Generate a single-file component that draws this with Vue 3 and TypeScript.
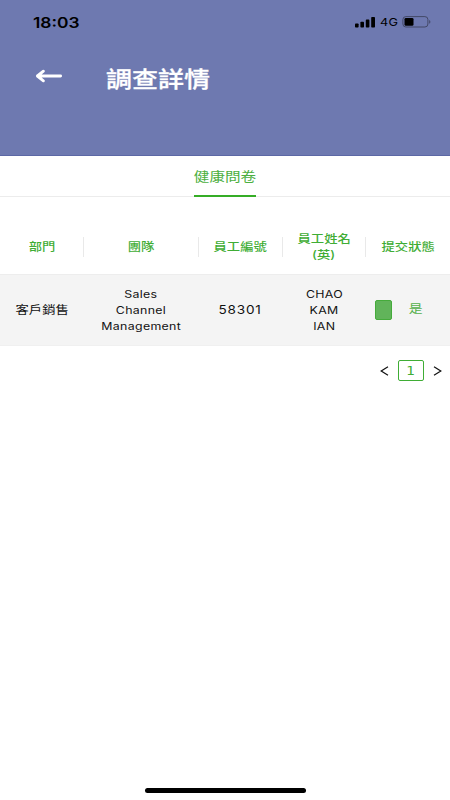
<script setup lang="ts">
interface Column {
  key: string
  lines: string[]
}

interface Cell {
  kind: 'han' | 'latin' | 'digits'
  lines: string[]
}

const columns: Column[] = [
  { key: 'department', lines: ['部門'] },
  { key: 'team', lines: ['團隊'] },
  { key: 'id', lines: ['員工編號'] },
  { key: 'name', lines: ['員工姓名', '(英)'] },
  { key: 'status', lines: ['提交狀態'] },
]

const row: Cell[] = [
  { kind: 'han', lines: ['客戶銷售'] },
  { kind: 'latin', lines: ['Sales', 'Channel', 'Management'] },
  { kind: 'digits', lines: ['58301'] },
  { kind: 'latin', lines: ['CHAO', 'KAM', 'IAN'] },
]
</script>

<template>
  <div class="screen">
    <header class="header">
      <div class="status-bar">
        <span class="time wide">18:03</span>
        <div class="indicators">
          <svg class="signal" width="20" height="11" viewBox="0 0 20 11">
            <rect x="0" y="6.5" width="3.6" height="4" rx="0.8" />
            <rect x="5.4" y="4.7" width="3.6" height="5.8" rx="0.8" />
            <rect x="10.8" y="2.6" width="3.6" height="7.9" rx="0.8" />
            <rect x="16.2" y="0" width="3.8" height="10.5" rx="0.8" />
          </svg>
          <span class="network wide">4G</span>
          <svg class="battery" width="30" height="12" viewBox="0 0 30 12">
            <rect x="0.9" y="0.6" width="25" height="10.4" rx="3" fill="none" stroke="#434967" stroke-width="1" />
            <rect x="2.5" y="2" width="9" height="7.7" rx="1.3" fill="#000" />
            <path d="M27.2 4v3.8c1.6-.5 1.6-3.3 0-3.8z" fill="#434967" />
          </svg>
        </div>
      </div>
      <div class="title-bar">
        <svg class="back" width="28" height="14" viewBox="0 0 28 14">
          <path d="M2.4 7H25.6M8.4 2.2L2.4 7L8.4 11.8" fill="none" stroke="#fff" stroke-width="2.9" stroke-linecap="round" stroke-linejoin="round" />
        </svg>
        <h1 class="title wide">調查詳情</h1>
      </div>
    </header>

    <nav class="tabs">
      <div class="tab"><span class="wide">健康問卷</span></div>
    </nav>

    <main>
      <div class="grid head">
        <div v-for="column in columns" :key="column.key" class="cell">
          <span v-for="line in column.lines" :key="line" class="wide">{{ line }}</span>
        </div>
      </div>
      <div class="grid body">
        <div v-for="(cell, index) in row" :key="index" class="cell" :class="cell.kind">
          <span v-for="line in cell.lines" :key="line" class="wide">{{ line }}</span>
        </div>
        <div class="cell status">
          <i class="mark"></i>
          <span class="yes wide">是</span>
        </div>
      </div>
      <div class="pager">
        <svg width="9" height="10" viewBox="0 0 9 10"><path d="M8 .8L1.2 5L8 9.2" /></svg>
        <div class="page"><span class="wide">1</span></div>
        <svg width="9" height="10" viewBox="0 0 9 10"><path d="M1 .8L7.8 5L1 9.2" /></svg>
      </div>
    </main>
    <div class="home"></div>
  </div>
</template>

<style>
body {
  background: #fff;
}
</style>

<style scoped>
.screen {
  width: 450px;
  height: 800px;
  display: flex;
  flex-direction: column;
  overflow: hidden;
  background: #fff;
  color: #111;
  font-family: Inter, "Noto Sans CJK TC", sans-serif;
}
.wide {
  display: block;
  white-space: nowrap;
  transform: scaleX(1.2);
}
.header {
  height: 156px;
  box-sizing: border-box;
  background: #6e79b0;
  border-bottom: 1px solid #5c68a5;
  flex: none;
}
.status-bar {
  display: flex;
  justify-content: space-between;
  align-items: center;
  height: 44px;
  padding: 0 18px 0 33px;
  color: #000;
}
.time {
  transform-origin: left;
  font-size: 14.5px;
  font-weight: 600;
}
.indicators {
  display: flex;
  align-items: center;
}
.network {
  width: 18px;
  margin: 1px 0 0 5px;
  transform-origin: left;
  font-size: 10.6px;
  font-weight: 400;
  letter-spacing: 0.3px;
}
.battery {
  margin-left: 4px;
}
.title-bar {
  display: flex;
  align-items: center;
  height: 70px;
  padding-left: 35px;
}
.back {
  margin: 0 43px 6px 0;
}
.title {
  margin: 0;
  transform-origin: left;
  font-size: 21.7px;
  line-height: 30px;
  font-weight: 500;
  -webkit-text-stroke: 0.3px #fff;
  color: #fff;
}
.tabs {
  display: flex;
  justify-content: center;
  height: 41px;
  box-sizing: border-box;
  border-bottom: 1px solid #ececec;
  flex: none;
}
.tab {
  width: 62px;
  height: 41px;
  box-sizing: border-box;
  border-bottom: 2px solid #35ad26;
  display: flex;
  justify-content: center;
  font-size: 13px;
  line-height: 40px;
  color: #4caf40;
}
.grid {
  display: grid;
  grid-template-columns: 83px 115px 84px 83px 85px;
}
.cell {
  display: flex;
  flex-direction: column;
  justify-content: center;
  align-items: center;
  position: relative;
  font-size: 11.1px;
  line-height: 16px;
}
.han {
  padding-left: 1px;
}
.latin {
  padding-left: 1px;
  font-size: 10.3px;
}
.latin .wide {
  letter-spacing: 0.27px;
}
.digits {
  font-size: 11.3px;
  letter-spacing: 0.7px;
}
.head {
  height: 77px;
  color: #3fad35;
}
.head .cell {
  padding-top: 23px;
  padding-left: 1px;
  font-weight: 500;
}
.head .cell + .cell::before {
  content: '';
  position: absolute;
  left: 0;
  top: 40px;
  width: 1px;
  height: 20px;
  background: #e9e9e9;
}
.body {
  height: 72px;
  box-sizing: border-box;
  border-top: 1px solid #ededed;
  border-bottom: 1px solid #f0f0f0;
  background: #f4f4f4;
}
.status {
  flex-direction: row;
  justify-content: flex-start;
  padding-left: 10px;
}
.mark {
  width: 17px;
  height: 20px;
  box-sizing: border-box;
  border: 1px solid #45ab3b;
  border-radius: 2px;
  background: #61b45a;
}
.yes {
  margin: -2px 0 0 18px;
  font-size: 11.5px;
  color: #55b04b;
}
.pager {
  display: flex;
  align-items: center;
  justify-content: flex-end;
  gap: 9px;
  padding: 14px 8px 0 0;
}
.pager path {
  fill: none;
  stroke: #111;
  stroke-width: 1.2;
}
.page {
  width: 26px;
  height: 21px;
  box-sizing: border-box;
  border: 1px solid #3fad35;
  border-radius: 2px;
  display: flex;
  align-items: center;
  justify-content: center;
  font-family: "DejaVu Sans", sans-serif;
  font-size: 11.5px;
  color: #3fad35;
}
.home {
  width: 161px;
  height: 5px;
  margin: auto auto 7px;
  border-radius: 3px;
  background: #000;
}
</style>
